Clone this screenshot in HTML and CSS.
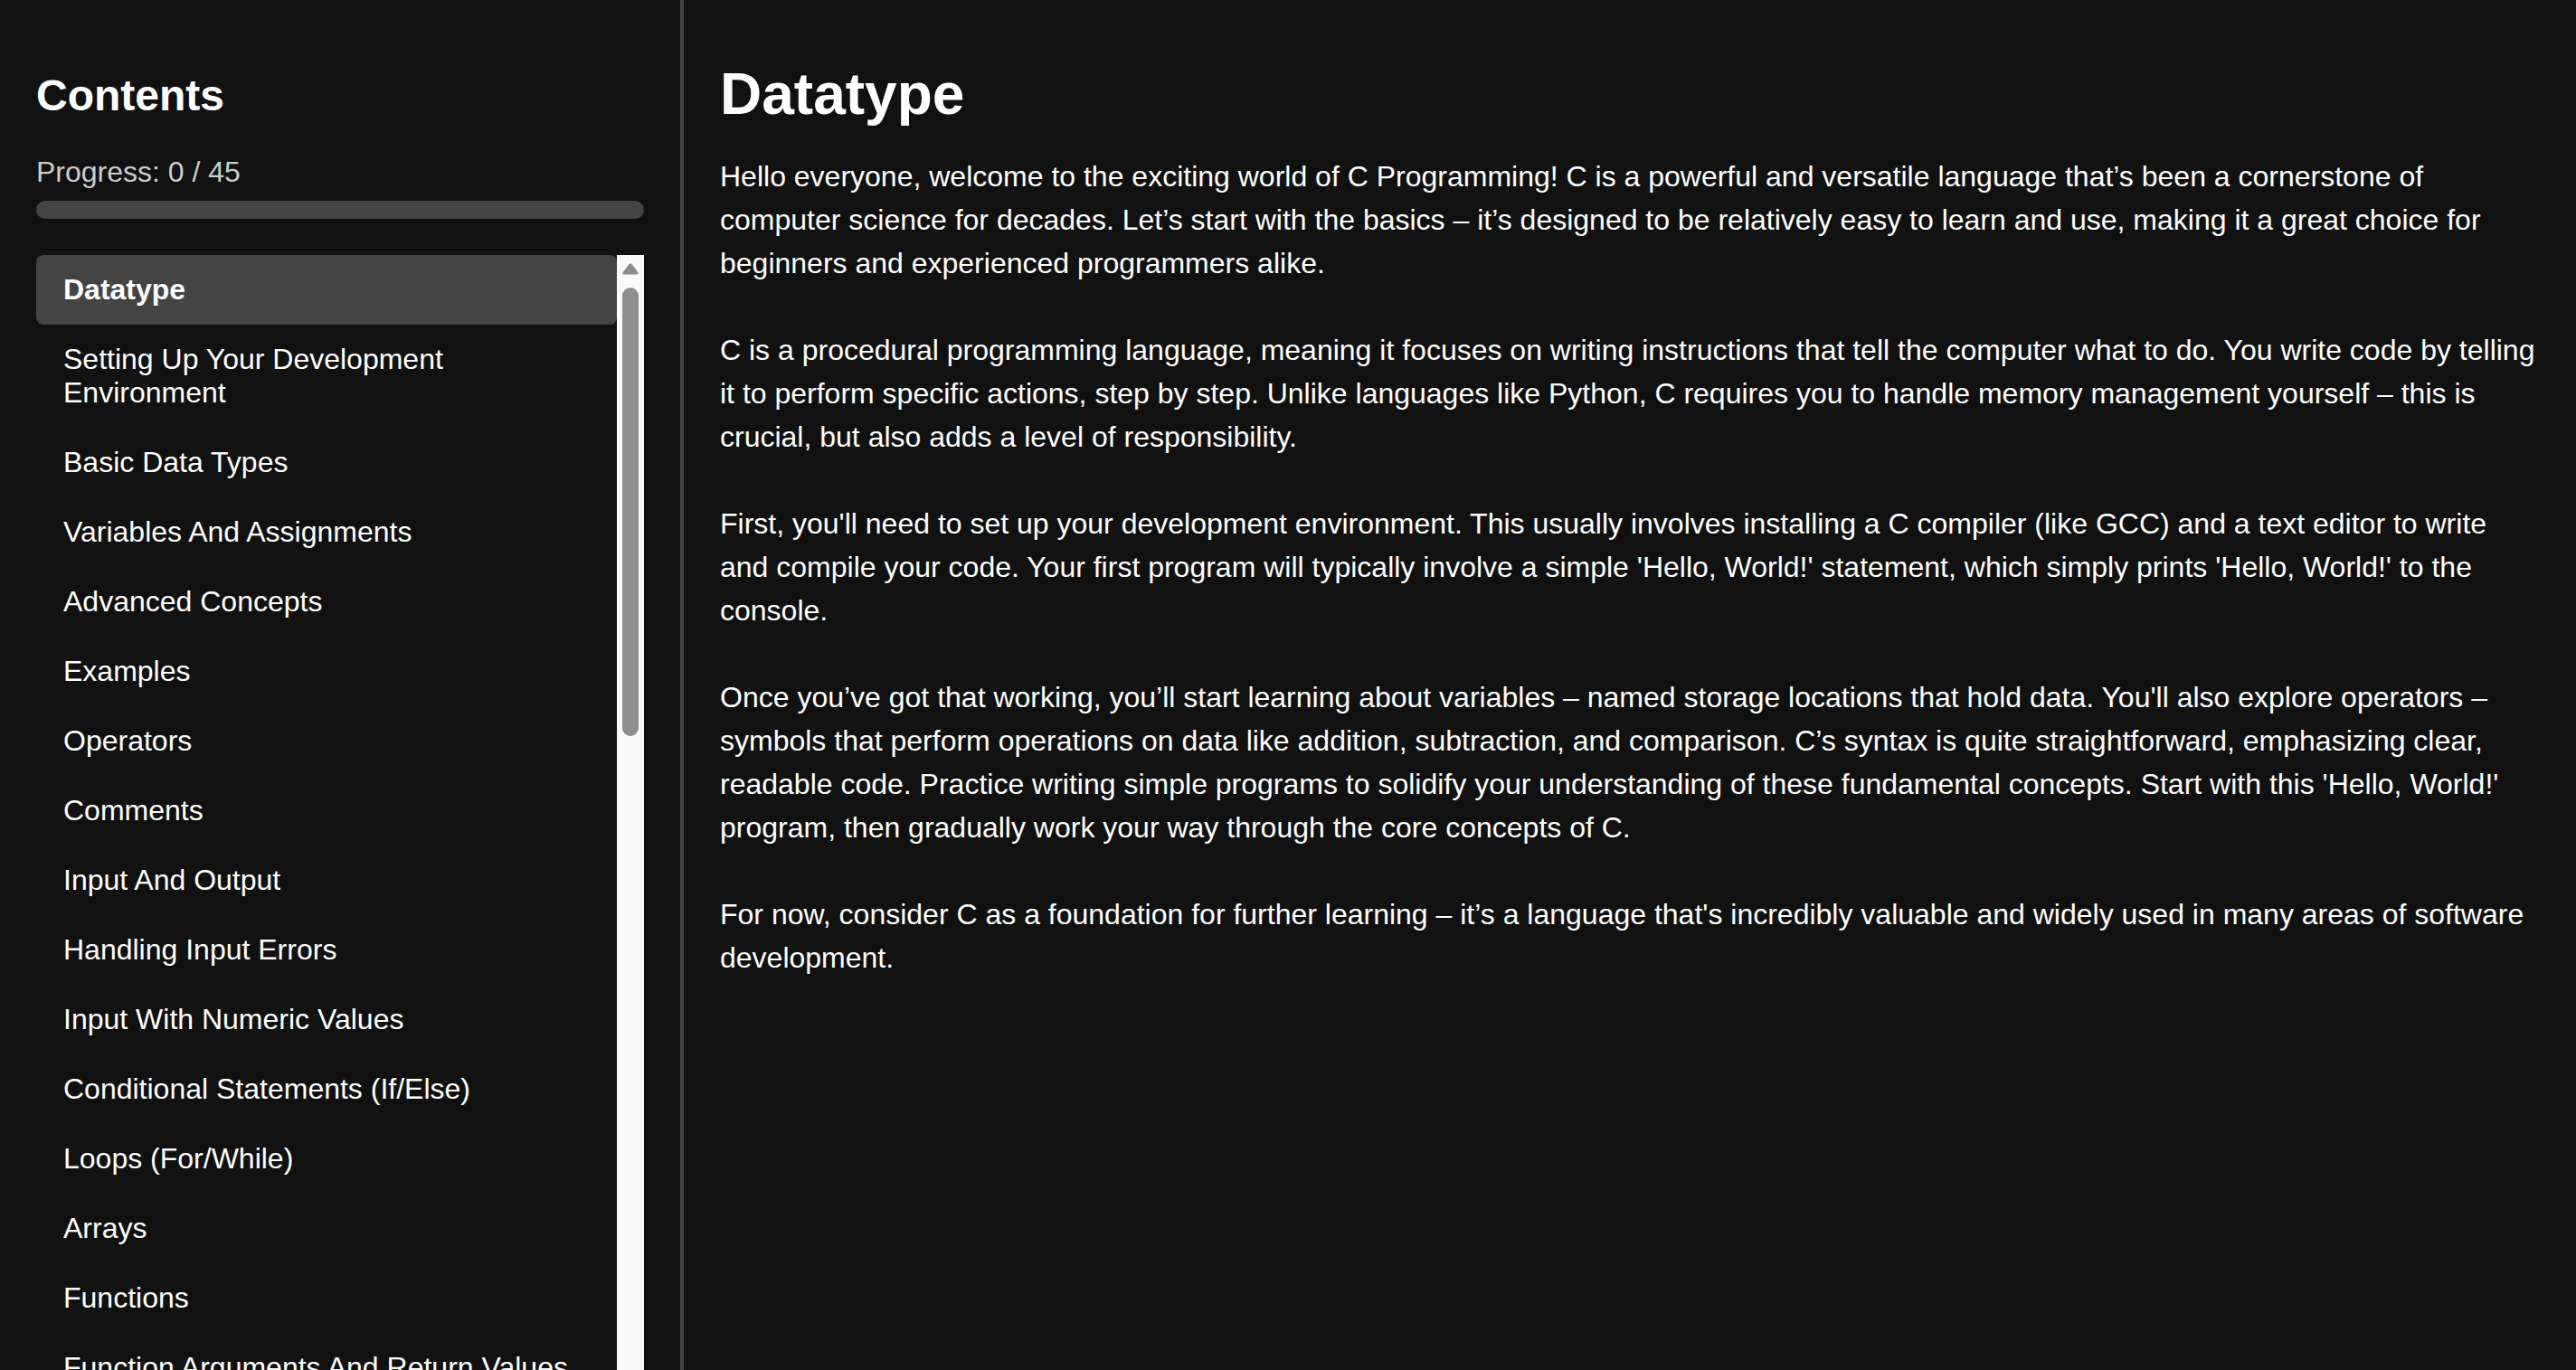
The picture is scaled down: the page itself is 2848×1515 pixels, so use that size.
FILE: index.html
```html
<!DOCTYPE html>
<html lang="en">
<head>
<meta charset="utf-8">
<title>C Programming – Datatype</title>
<link rel="stylesheet" href="styles.css">
</head>
<body>
<div class="app">
  <aside class="sidebar">
    <h2 class="sidebar-title">Contents</h2>
    <div class="progress-label">Progress: 0 / 45</div>
    <div class="progress-bar"><div class="progress-fill" style="width: 0%"></div></div>
    <div class="toc-wrap">
      <ul class="toc">
        <li class="toc-item active">Datatype</li>
        <li class="toc-item">Setting Up Your Development Environment</li>
        <li class="toc-item">Basic Data Types</li>
        <li class="toc-item">Variables And Assignments</li>
        <li class="toc-item">Advanced Concepts</li>
        <li class="toc-item">Examples</li>
        <li class="toc-item">Operators</li>
        <li class="toc-item">Comments</li>
        <li class="toc-item">Input And Output</li>
        <li class="toc-item">Handling Input Errors</li>
        <li class="toc-item">Input With Numeric Values</li>
        <li class="toc-item">Conditional Statements (If/Else)</li>
        <li class="toc-item">Loops (For/While)</li>
        <li class="toc-item">Arrays</li>
        <li class="toc-item">Functions</li>
        <li class="toc-item">Function Arguments And Return Values</li>
      </ul>
      <div class="scrollbar">
        <div class="scroll-button">
          <svg class="scroll-arrow" width="18" height="13" viewBox="0 0 18 13"><path d="M7.3 1.2 Q9 -0.6 10.7 1.2 L17.2 10 Q18.4 12.6 15.6 12.6 L2.4 12.6 Q-0.4 12.6 0.8 10 Z" fill="#8b8b8b"/></svg>
        </div>
        <div class="scroll-thumb"></div>
      </div>
    </div>
  </aside>
  <main class="content">
    <h1 class="content-title">Datatype</h1>
    <p class="content-text">Hello everyone, welcome to the exciting world of C Programming! C is a powerful and versatile language that’s been a cornerstone of computer science for decades. Let’s start with the basics – it’s designed to be relatively easy to learn and use, making it a great choice for beginners and experienced programmers alike.</p>
    <p class="content-text">C is a procedural programming language, meaning it focuses on writing instructions that tell the computer what to do. You write code by telling it to perform specific actions, step by step. Unlike languages like Python, C requires you to handle memory management yourself – this is crucial, but also adds a level of responsibility.</p>
    <p class="content-text">First, you'll need to set up your development environment. This usually involves installing a C compiler (like GCC) and a text editor to write and compile your code. Your first program will typically involve a simple 'Hello, World!' statement, which simply prints 'Hello, World!' to the console.</p>
    <p class="content-text">Once you’ve got that working, you’ll start learning about variables – named storage locations that hold data. You'll also explore operators – symbols that perform operations on data like addition, subtraction, and comparison. C’s syntax is quite straightforward, emphasizing clear, readable code. Practice writing simple programs to solidify your understanding of these fundamental concepts. Start with this 'Hello, World!' program, then gradually work your way through the core concepts of C.</p>
    <p class="content-text">For now, consider C as a foundation for further learning – it’s a language that's incredibly valuable and widely used in many areas of software development.</p>
  </main>
</div>
</body>
</html>
```

FILE: styles.css
```css
html, body {
  margin: 0;
  padding: 0;
  background: #111111;
  color: #ffffff;
  font-family: "Liberation Sans", Arial, sans-serif;
  height: 100%;
  overflow: hidden;
}

.app {
  display: flex;
  height: 100vh;
  overflow: hidden;
}

.sidebar {
  box-sizing: border-box;
  width: 756px;
  flex: 0 0 756px;
  height: 100vh;
  padding: 40px 40px 0 40px;
  border-right: 4px solid #444444;
  display: flex;
  flex-direction: column;
  overflow: hidden;
}

.sidebar-title {
  font-size: 48px;
  line-height: 1.15;
  font-weight: bold;
  margin: 38px 0 39px 0;
}

.progress-label {
  font-size: 32px;
  line-height: 1.15;
  color: #cccccc;
}

.progress-bar {
  height: 20px;
  margin: 13px 0 40px 0;
  background: #444444;
  border-radius: 10px;
  overflow: hidden;
  flex: 0 0 auto;
}

.progress-fill {
  height: 100%;
  background: #4caf50;
}

.toc-wrap {
  flex: 1 1 auto;
  min-height: 0;
  display: flex;
}

.toc {
  flex: 1 1 auto;
  min-width: 0;
  list-style: none;
  margin: 0;
  padding: 0;
  overflow: hidden;
}

.toc-item {
  font-size: 32px;
  line-height: 37px;
  padding: 20px 30px;
  border-radius: 8px;
  color: #ffffff;
  cursor: pointer;
}

.toc-item.active {
  background: #444444;
  font-weight: bold;
}

.scrollbar {
  flex: 0 0 30px;
  width: 30px;
  background: #fafafa;
  display: flex;
  flex-direction: column;
  align-items: center;
}

.scroll-button {
  height: 30px;
  width: 30px;
  display: flex;
  align-items: flex-start;
  justify-content: center;
  padding-top: 9px;
  box-sizing: border-box;
}

.scroll-arrow {
  display: block;
}

.scroll-thumb {
  width: 18px;
  height: 496px;
  margin-top: 6px;
  border-radius: 9px;
  background: #8f8f8f;
}

.content {
  flex: 1 1 auto;
  min-width: 0;
  padding: 40px;
  overflow: hidden;
}

.content-title {
  font-size: 64px;
  line-height: 1.15;
  font-weight: bold;
  margin: 28px 0 29px 0;
}

.content-text {
  font-size: 32px;
  line-height: 48px;
  margin: 0 0 48px 0;
}
```
